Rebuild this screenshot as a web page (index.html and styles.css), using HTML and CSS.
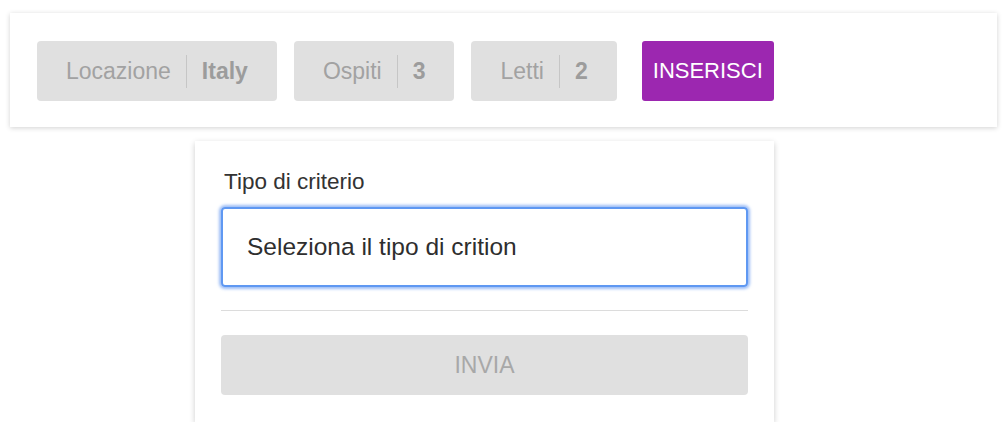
FILE: index.html
```html
<!DOCTYPE html>
<html lang="it">
<head>
    <meta charset="UTF-8">
    <meta name="viewport" content="width=device-width, initial-scale=1.0">
    <title>Ricerca</title>
    <link rel="stylesheet" href="styles.css">
</head>
<body>

    <!-- Barra dei filtri -->
    <div class="filter-bar">
        <button class="chip">
            <span class="chip-label">Locazione</span>
            <span class="chip-sep"></span>
            <span class="chip-value">Italy</span>
        </button>
        <button class="chip">
            <span class="chip-label">Ospiti</span>
            <span class="chip-sep"></span>
            <span class="chip-value">3</span>
        </button>
        <button class="chip">
            <span class="chip-label">Letti</span>
            <span class="chip-sep"></span>
            <span class="chip-value">2</span>
        </button>
        <button class="add-button">INSERISCI</button>
    </div>

    <!-- Pannello per il nuovo criterio -->
    <div class="criteria-panel">
        <label class="field-label" for="criteriaType">Tipo di criterio</label>
        <div class="field-input" id="criteriaType">Seleziona il tipo di crition</div>
        <div class="divider"></div>
        <button class="submit-button" disabled>INVIA</button>
    </div>

</body>
</html>
```

FILE: styles.css
```css
/* General styling */
body {
    font-family: "Liberation Sans", Arial, sans-serif;
    margin: 0;
    padding: 13px 8px 0 10px;
    background-color: #fff;
    color: #333;
}

button {
    font-family: inherit;
    border: none;
    cursor: pointer;
}

/* Filter bar */
.filter-bar {
    display: flex;
    align-items: center;
    gap: 17px;
    padding: 28px 27px 26px;
    background-color: #fff;
    box-shadow: 0 1px 5px rgba(0, 0, 0, 0.18);
}

.chip {
    display: flex;
    align-items: center;
    height: 60px;
    padding: 0 29px;
    font-size: 23px;
    color: #a2a2a2;
    background-color: #e0e0e0;
    border-radius: 4px;
}

.chip:last-of-type {
    padding: 0 28px;
}

.chip-sep {
    width: 1px;
    height: 33px;
    margin: 0 15px;
    background-color: #c6c6c6;
}

.chip-value {
    font-weight: bold;
    color: #9c9c9c;
}

.add-button {
    height: 60px;
    margin-left: 8px;
    padding: 0 11px;
    font-size: 22px;
    color: #fff;
    background-color: #9c27b0;
    border-radius: 3px;
}

/* Criteria panel */
.criteria-panel {
    width: 579px;
    box-sizing: border-box;
    margin: 14px 0 0 185px;
    padding: 28px 26px 27px;
    background-color: #fff;
    box-shadow: 0 2px 6px rgba(0, 0, 0, 0.2);
}

.field-label {
    display: block;
    padding-left: 3px;
    font-size: 22.5px;
    line-height: 26px;
    color: #333;
}

.field-input {
    display: flex;
    align-items: center;
    height: 80px;
    box-sizing: border-box;
    margin-top: 12px;
    padding-left: 24px;
    font-size: 24.5px;
    color: #2e2e2e;
    border: 2px solid #5f98f2;
    border-radius: 4px;
    box-shadow: 0 0 3px 2px rgba(90, 145, 240, 0.6);
}

.divider {
    height: 1px;
    margin: 23px 0 24px;
    background-color: #dcdcdc;
}

.submit-button {
    display: block;
    width: 100%;
    height: 60px;
    font-size: 23px;
    color: #a8a8a8;
    background-color: #e0e0e0;
    border-radius: 4px;
    cursor: default;
}
```
